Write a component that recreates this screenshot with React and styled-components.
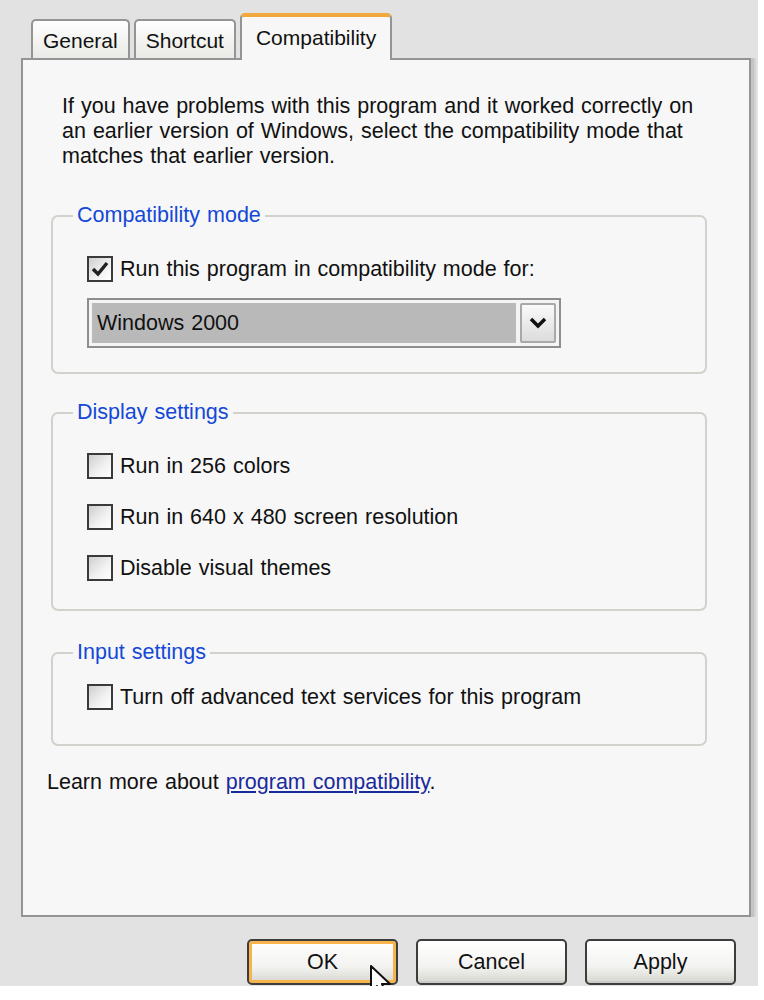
import React from 'react';
import styled, { createGlobalStyle } from 'styled-components';

const colors = {
  frame: '#e2e2e2',
  panel: '#f7f7f7',
  border: '#949494',
  group: '#d2d2cc',
  legend: '#1448d6',
  text: '#111111',
  link: '#1a2a9c',
};

const GlobalStyle = createGlobalStyle`
  html, body {
    margin: 0;
    padding: 0;
    background: #ffffff;
  }
  body {
    font-family: "Liberation Sans", Arial, sans-serif;
    font-size: 21.5px;
    line-height: 25px;
    word-spacing: 1px;
    color: ${colors.text};
  }
`;

const Frame = styled.div`
  width: 758px;
  height: 986px;
  background: ${colors.frame};
  padding: 13px 0 0 21px;
  box-sizing: border-box;
`;

const TabBar = styled.div`
  display: flex;
  align-items: flex-end;
  padding-left: 10px;
  position: relative;
  z-index: 2;
  font-size: 21px;
  word-spacing: 0;
`;

const Tab = styled.div`
  box-sizing: border-box;
  height: ${(p) => (p.active ? '47px' : '39px')};
  margin-bottom: ${(p) => (p.active ? '-2px' : '0')};
  margin-right: ${(p) => (p.active ? '0' : '4px')};
  padding: ${(p) => (p.active ? '8px 14px 0' : '7px 10px 0')};
  border: 2px solid ${colors.border};
  border-bottom: none;
  border-top: ${(p) => (p.active ? '4px solid #f0a93a' : `2px solid ${colors.border}`)};
  border-radius: 5px 5px 0 0;
  background: ${(p) => (p.active ? colors.panel : 'linear-gradient(#ffffff, #e9e9e6)')};
  white-space: nowrap;
`;

const Panel = styled.div`
  position: relative;
  z-index: 1;
  box-sizing: border-box;
  width: 730px;
  height: 859px;
  background: ${colors.panel};
  border: 2px solid ${colors.border};
  box-shadow: 3px 0 0 #c4c4c4, 5px 0 0 #d2d2d2;
  padding: 34px 42px 0 28px;
`;

const Intro = styled.p`
  margin: 0 0 34px 11px;
  width: 650px;
`;

const Group = styled.fieldset`
  margin: 0 0 ${(p) => p.after}px 0;
  padding: 0 0 ${(p) => p.bottom}px 34px;
  border: 2px solid ${colors.group};
  border-radius: 7px;
`;

const Legend = styled.legend`
  margin-left: -14px;
  padding: 0 4px;
  color: ${colors.legend};
`;

const Rows = styled.div`
  display: flex;
  flex-direction: column;
  gap: ${(p) => p.gap}px;
  margin-top: ${(p) => p.top}px;
`;

const Option = styled.label`
  display: flex;
  align-items: center;
  gap: 7px;
  height: 26px;
`;

const Box = styled.span`
  box-sizing: border-box;
  width: 26px;
  height: 26px;
  border: 2px solid #3a3a3a;
  background: linear-gradient(135deg, #cfcfcf, #f2f2f2 60%, #ffffff);
  display: flex;
  align-items: center;
  justify-content: center;
`;

const Select = styled.div`
  display: flex;
  align-items: center;
  width: 474px;
  height: 50px;
  box-sizing: border-box;
  border: 2px solid #8e8e8e;
  background: #f4f4f4;
  padding: 3px;
  gap: 4px;
`;

const SelectValue = styled.div`
  flex: 1;
  align-self: stretch;
  background: #b9b9b9;
  padding-left: 5px;
  display: flex;
  align-items: center;
`;

const SelectArrow = styled.div`
  width: 36px;
  align-self: stretch;
  box-sizing: border-box;
  border: 2px solid #a9a9a9;
  border-radius: 2px;
  background: linear-gradient(#fafafa, #dcdcdc);
  display: flex;
  align-items: center;
  justify-content: center;
`;

const More = styled.p`
  margin: 0 0 0 -4px;
`;

const Link = styled.a`
  color: ${colors.link};
  text-decoration: underline;
`;

const ButtonBar = styled.div`
  display: flex;
  gap: 18px;
  margin-top: 22px;
  padding-left: 226px;
  word-spacing: 0;
`;

const Button = styled.div`
  position: relative;
  box-sizing: border-box;
  width: 151px;
  height: 46px;
  border: 2px solid #3d3d3d;
  border-radius: 5px;
  background: linear-gradient(#ffffff, #f3f3f1 60%, #d6d6d0);
  box-shadow: ${(p) => (p.focused ? 'inset 0 0 0 3px #f7b44c' : 'inset 0 -2px 0 #cacaca')};
  display: flex;
  align-items: center;
  justify-content: center;
`;

const Cursor = styled.svg`
  position: absolute;
  left: 121px;
  top: 24px;
`;

function Check({ checked, children }) {
  return (
    <Option>
      <Box>
        {checked && (
          <svg width="18" height="16" viewBox="0 0 18 16">
            <path d="M2 8 L7 13 L16 2" fill="none" stroke="#222" strokeWidth="3.5" />
          </svg>
        )}
      </Box>
      <span>{children}</span>
    </Option>
  );
}

export default function App() {
  return (
    <>
      <GlobalStyle />
      <Frame>
        <TabBar>
          <Tab>General</Tab>
          <Tab>Shortcut</Tab>
          <Tab active>Compatibility</Tab>
        </TabBar>
        <Panel>
          <Intro>
            If you have problems with this program and it worked correctly on
            an earlier version of Windows, select the compatibility mode that
            matches that earlier version.
          </Intro>

          <Group after={26} bottom={24}>
            <Legend>Compatibility mode</Legend>
            <Rows top={28} gap={16}>
              <Check checked>Run this program in compatibility mode for:</Check>
              <Select>
                <SelectValue>Windows 2000</SelectValue>
                <SelectArrow>
                  <svg width="18" height="12" viewBox="0 0 18 12">
                    <path d="M2 2 L9 9 L16 2" fill="none" stroke="#111" strokeWidth="3.5" />
                  </svg>
                </SelectArrow>
              </Select>
            </Rows>
          </Group>

          <Group after={29} bottom={28}>
            <Legend>Display settings</Legend>
            <Rows top={28} gap={25}>
              <Check>Run in 256 colors</Check>
              <Check>Run in 640 x 480 screen resolution</Check>
              <Check>Disable visual themes</Check>
            </Rows>
          </Group>

          <Group after={24} bottom={34}>
            <Legend>Input settings</Legend>
            <Rows top={19} gap={0}>
              <Check>Turn off advanced text services for this program</Check>
            </Rows>
          </Group>

          <More>
            Learn more about <Link href="#">program compatibility</Link>.
          </More>
        </Panel>

        <ButtonBar>
          <Button focused>
            OK
            <Cursor width="24" height="36" viewBox="0 0 24 36">
              <path
                d="M1 1 L1 27 L7 21 L12 33 L17 31 L12 19 L20 19 Z"
                fill="#ffffff"
                stroke="#111"
                strokeWidth="2"
                strokeLinejoin="round"
              />
            </Cursor>
          </Button>
          <Button>Cancel</Button>
          <Button>Apply</Button>
        </ButtonBar>
      </Frame>
    </>
  );
}
